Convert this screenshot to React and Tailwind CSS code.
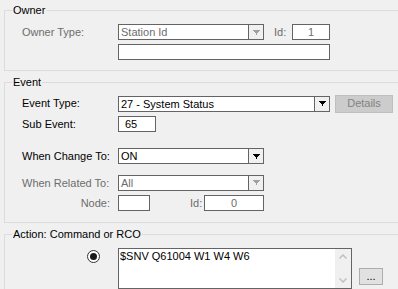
import React from "react";

const Arrow = ({ disabled }) => (
  <svg width="7" height="5" viewBox="0 0 7 5" shapeRendering="crispEdges">
    <path
      d="M0 0H7V1H6V2H5V3H4V5H3V3H2V2H1V1H0Z"
      fill={disabled ? "#a0a0a0" : "#000"}
    />
  </svg>
);

const Combo = ({ value, width, disabled }) => (
  <div
    className={`flex h-[16px] border border-[#646464] bg-white ${width}`}
  >
    <div
      className={`flex-1 pl-[2px] leading-[14px] ${disabled ? "text-[#6d6d6d]" : "text-black"}`}
    >
      {value}
    </div>
    <div className="w-[15px] border-l border-[#646464] bg-[#f0f0f0] flex items-center justify-center">
      <Arrow disabled={disabled} />
    </div>
  </div>
);

const Box = ({ value, width, className = "" }) => (
  <div
    className={`h-[16px] border border-[#646464] bg-white leading-[14px] ${width} ${className}`}
  >
    {value}
  </div>
);

const Label = ({ children, gray, right }) => (
  <div
    className={`w-[96px] shrink-0 ${gray ? "text-[#6d6d6d]" : "text-black"} ${right ? "text-right pr-[8px]" : ""}`}
  >
    {children}
  </div>
);

const Group = ({ title, className = "", children }) => (
  <fieldset className={`ml-[4px] border border-r-0 border-[#dcdcdc] ${className}`}>
    <legend className="ml-[7px] px-[1px] leading-[13px] text-black">{title}</legend>
    {children}
  </fieldset>
);

export default function App() {
  return (
    <div className="w-[398px] h-[289px] overflow-hidden bg-[#f0f0f0] text-[11px] font-['Liberation_Sans',Arial,sans-serif] text-black">
      <Group title="Owner" className="mt-[4px]">
        <div className="pl-[17px] pt-[7px] pb-[10px]">
          <div className="flex items-center">
            <Label gray>Owner Type:</Label>
            <Combo value="Station Id" width="w-[146px]" disabled />
            <div className="ml-[10px] w-[18px] text-[#6d6d6d]">Id:</div>
            <Box value="1" width="w-[38px]" className="text-center text-[#6d6d6d]" />
          </div>
          <div className="flex items-center mt-[3px]">
            <div className="w-[96px] shrink-0" />
            <Box value="" width="w-[212px]" />
          </div>
        </div>
      </Group>

      <Group title="Event" className="mt-[5px]">
        <div className="pl-[17px] pt-[6px] pb-[10px]">
          <div className="flex items-center h-[18px]">
            <Label>Event Type:</Label>
            <Combo value="27 - System Status" width="w-[212px]" />
            <div className="ml-[5px] w-[58px] h-[18px] border border-[#bfbfbf] bg-[#cccccc] text-[#838383] flex items-center justify-center">
              Details
            </div>
          </div>
          <div className="flex items-center mt-[3px]">
            <Label>Sub Event:</Label>
            <Box value="65" width="w-[38px]" className="pl-[6px]" />
          </div>
          <div className="flex items-center mt-[16px]">
            <Label>When Change To:</Label>
            <Combo value="ON" width="w-[146px]" />
          </div>
          <div className="flex items-center mt-[10px]">
            <Label gray>When Related To:</Label>
            <Combo value="All" width="w-[146px]" disabled />
          </div>
          <div className="flex items-center mt-[4px]">
            <Label gray right>Node:</Label>
            <Box value="" width="w-[32px]" />
            <div className="ml-[40px] w-[14px] text-[#6d6d6d]">Id:</div>
            <Box value="0" width="w-[60px]" className="text-center text-[#6d6d6d]" />
          </div>
        </div>
      </Group>

      <Group title="Action: Command or RCO" className="mt-[5px]">
        <div className="pl-[17px] pt-[7px] pb-[10px] flex items-start">
          <div className="w-[96px] shrink-0 flex justify-end pr-[18px] pt-[2px]">
            <div className="w-[13px] h-[13px] rounded-full border border-[#333333] bg-white flex items-center justify-center">
              <div className="w-[7px] h-[7px] rounded-full bg-[#1a1a1a]" />
            </div>
          </div>
          <div className="flex w-[234px] h-[41px] border border-[#646464] bg-white">
            <div className="flex-1 pl-[1px] pt-[1px] leading-[13px]">$SNV Q61004 W1 W4 W6</div>
            <div className="w-[16px] bg-[#f0f0f0] flex flex-col items-center justify-between py-[5px]">
              <svg width="8" height="5" viewBox="0 0 8 5">
                <polyline points="0.5,4.5 4,1 7.5,4.5" fill="none" stroke="#c0c0c0" strokeWidth="1.5" />
              </svg>
              <svg width="8" height="5" viewBox="0 0 8 5">
                <polyline points="0.5,0.5 4,4 7.5,0.5" fill="none" stroke="#c0c0c0" strokeWidth="1.5" />
              </svg>
            </div>
          </div>
          <div className="ml-[7px] mt-[20px] w-[24px] h-[17px] border border-[#adadad] bg-[#e1e1e1] flex items-center justify-center leading-none">
            ...
          </div>
        </div>
      </Group>
    </div>
  );
}
